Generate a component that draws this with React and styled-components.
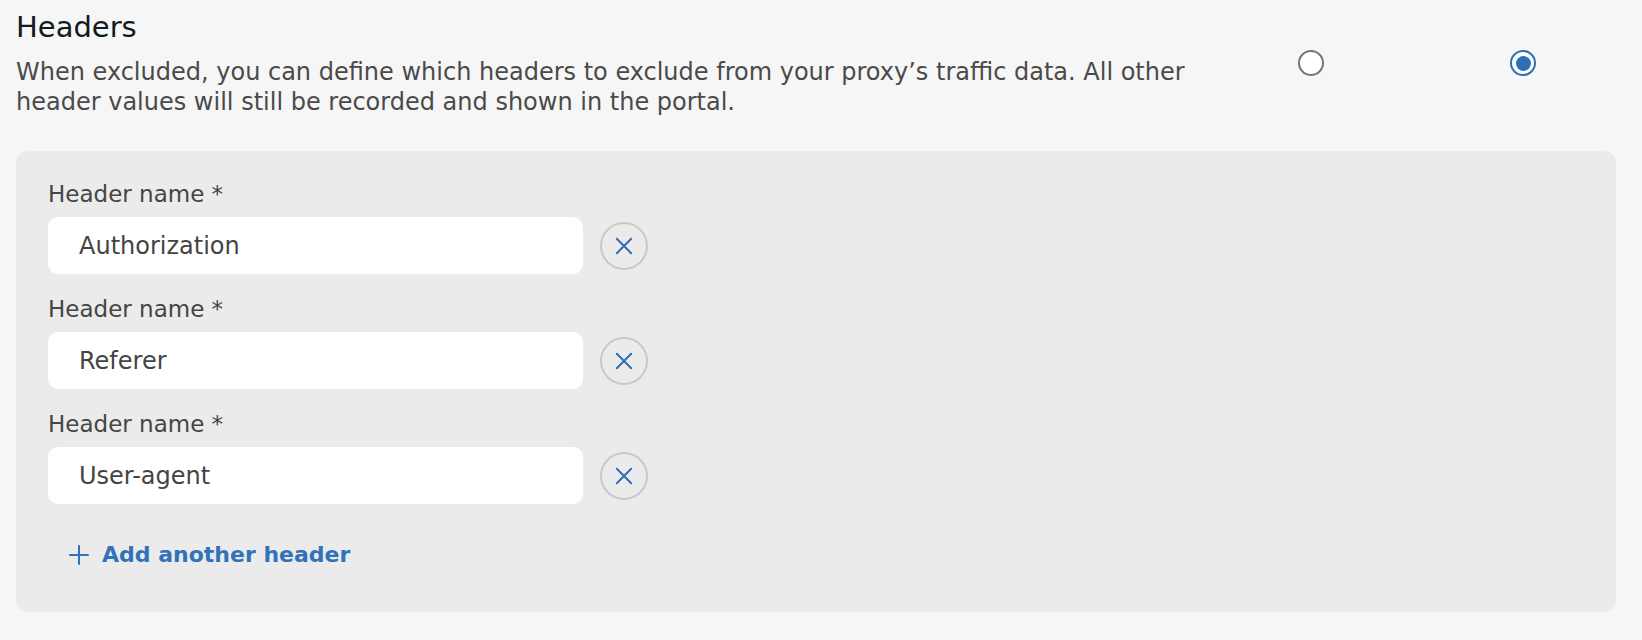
import React from 'react';
import styled, { createGlobalStyle } from 'styled-components';

const GlobalStyle = createGlobalStyle`
    html, body {
        margin: 0;
        padding: 0;
        background: #f6f6f6;
    }
    body {
        font-family: "DejaVu Sans", "Liberation Sans", sans-serif;
        color: #4a4a4a;
    }
`;

const Page = styled.div`
    padding: 10px 13px 0 16px;
`;

const Top = styled.div`
    display: grid;
    grid-template-columns: 1fr 212px 212px;
    align-items: start;
`;

const Title = styled.h3`
    margin: 0;
    font-size: 29px;
    line-height: 34px;
    font-weight: 400;
    color: #111a22;
`;

const Description = styled.p`
    margin: 13px 0 0;
    max-width: 1200px;
    font-size: 24px;
    line-height: 30px;
    color: #4a4a4a;
`;

const RadioCell = styled.div`
    display: flex;
    justify-content: center;
    padding-top: 40px;
`;

const Radio = styled.span`
    box-sizing: border-box;
    width: 26px;
    height: 26px;
    border-radius: 50%;
    border: ${props => (props.checked ? '2.5px solid #2f6fb5' : '2px solid #767676')};
    background: #fff;
    display: flex;
    align-items: center;
    justify-content: center;

    &::after {
        content: '';
        display: ${props => (props.checked ? 'block' : 'none')};
        width: 15px;
        height: 15px;
        border-radius: 50%;
        background: #2f6fb5;
    }
`;

const Panel = styled.div`
    margin-top: 34px;
    background: #ebebeb;
    border-radius: 12px;
    padding: 30px 32px 42px;
    width: 1600px;
    box-sizing: border-box;
`;

const Field = styled.div`
    & + & {
        margin-top: 22px;
    }
`;

const Label = styled.label`
    display: block;
    font-size: 23px;
    line-height: 26px;
    color: #454545;
    margin-bottom: 10px;
`;

const Row = styled.div`
    display: flex;
    align-items: center;
    gap: 17px;
`;

const Input = styled.div`
    box-sizing: border-box;
    width: 535px;
    height: 57px;
    background: #fff;
    border-radius: 10px;
    padding: 0 31px;
    display: flex;
    align-items: center;
    font-size: 24px;
    color: #444;
`;

const RemoveBtn = styled.button`
    box-sizing: border-box;
    width: 48px;
    height: 48px;
    border-radius: 50%;
    border: 2px solid #c9c9c9;
    background: transparent;
    display: flex;
    align-items: center;
    justify-content: center;
    padding: 0;
    cursor: pointer;
`;

const AddLink = styled.a`
    display: inline-flex;
    align-items: center;
    gap: 13px;
    margin: 36px 0 0 21px;
    font-size: 22px;
    font-weight: 700;
    color: #3272b8;
    text-decoration: none;
    line-height: 30px;
`;

const CloseIcon = () => (
    <svg width="18" height="18" viewBox="0 0 18 18" fill="none">
        <path d="M1.8 1.8L16.2 16.2M16.2 1.8L1.8 16.2" stroke="#2f6fb5" strokeWidth="2" strokeLinecap="round" />
    </svg>
);

const PlusIcon = () => (
    <svg width="20" height="20" viewBox="0 0 20 20" fill="none">
        <path d="M10 1V19M1 10H19" stroke="#3272b8" strokeWidth="2" strokeLinecap="round" />
    </svg>
);

const headers = ['Authorization', 'Referer', 'User-agent'];

export default function App() {
    return (
        <Page>
            <GlobalStyle />
            <Top>
                <div>
                    <Title>Headers</Title>
                    <Description>
                        When excluded, you can define which headers to exclude from your proxy’s traffic data. All other header values will still be recorded and shown in the portal.
                    </Description>
                </div>
                <RadioCell><Radio /></RadioCell>
                <RadioCell><Radio checked /></RadioCell>
            </Top>
            <Panel>
                {headers.map(h => (
                    <Field key={h}>
                        <Label>Header name *</Label>
                        <Row>
                            <Input>{h}</Input>
                            <RemoveBtn><CloseIcon /></RemoveBtn>
                        </Row>
                    </Field>
                ))}
                <AddLink href="#"><PlusIcon />Add another header</AddLink>
            </Panel>
        </Page>
    );
}
